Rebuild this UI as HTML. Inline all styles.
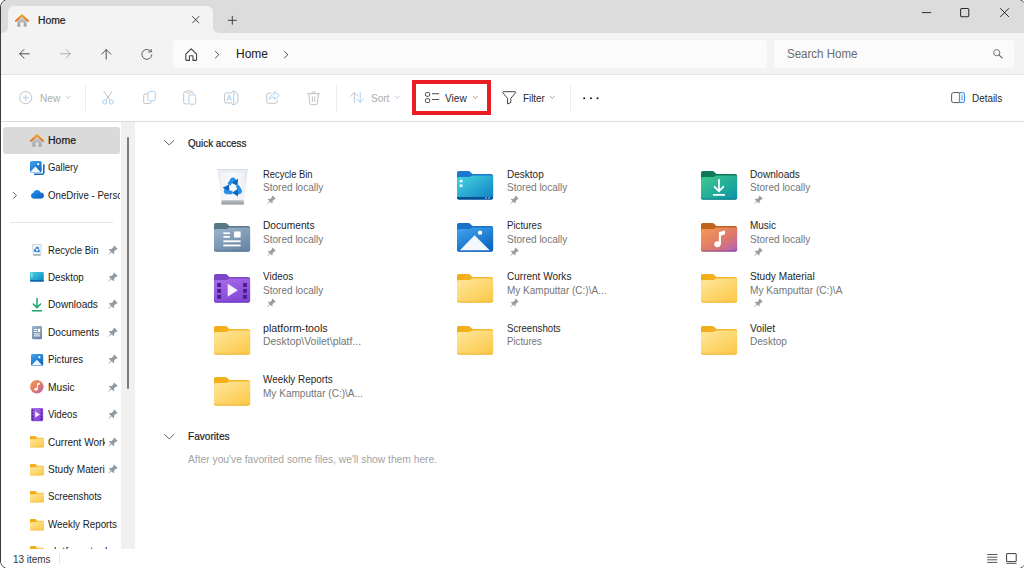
<!DOCTYPE html>
<html lang="en"><head><meta charset="utf-8"><title>Home - File Explorer</title>
<style>
html,body{margin:0;padding:0;background:#fff;}
body{width:1024px;height:568px;overflow:hidden;position:relative;font-family:"Liberation Sans", sans-serif;}
#win{position:absolute;left:0;top:-1px;width:1026px;height:570px;box-sizing:border-box;border:1px solid #3d3d3d;border-radius:8px;overflow:hidden;background:#fff;}
#in{position:absolute;left:-1px;top:0;width:1030px;height:568px;}
.b{position:absolute;}
.i{position:absolute;overflow:visible;}
.t{position:absolute;white-space:nowrap;line-height:16px;height:16px;}
.s{display:inline-block;transform-origin:0 50%;}
</style></head>
<body>
<svg width="0" height="0" style="position:absolute">
<defs>
<linearGradient id="gy" x1="0" y1="0" x2="0.8" y2="1"><stop offset="0" stop-color="#ffe79e"/><stop offset="1" stop-color="#fbca4c"/></linearGradient>
<linearGradient id="gyt" x1="0" y1="0" x2="1" y2="0"><stop offset="0" stop-color="#f2ac17"/><stop offset="1" stop-color="#f6bd33"/></linearGradient>
<linearGradient id="gdesk" x1="0" y1="0" x2="1" y2="1"><stop offset="0" stop-color="#46d6de"/><stop offset="1" stop-color="#0f7fc6"/></linearGradient>
<linearGradient id="gdown" x1="0" y1="0" x2="1" y2="1"><stop offset="0" stop-color="#3fcb8c"/><stop offset="1" stop-color="#0b93a6"/></linearGradient>
<linearGradient id="gdoc" x1="0" y1="0" x2="0.6" y2="1"><stop offset="0" stop-color="#9db6cc"/><stop offset="1" stop-color="#6c88a8"/></linearGradient>
<linearGradient id="gpic" x1="0" y1="0" x2="0.6" y2="1"><stop offset="0" stop-color="#45a6ee"/><stop offset="1" stop-color="#0c67c2"/></linearGradient>
<linearGradient id="gmus" x1="0" y1="0" x2="1" y2="1"><stop offset="0" stop-color="#f49c52"/><stop offset="0.55" stop-color="#e07a68"/><stop offset="0.85" stop-color="#c4689e"/><stop offset="1" stop-color="#9458d0"/></linearGradient>
<linearGradient id="gvid" x1="0" y1="0" x2="0.5" y2="1"><stop offset="0" stop-color="#ab6ee9"/><stop offset="1" stop-color="#8447d6"/></linearGradient>
<linearGradient id="gbin" x1="0" y1="0" x2="1" y2="0"><stop offset="0" stop-color="#dde4ea"/><stop offset="0.12" stop-color="#f1f4f6"/><stop offset="0.5" stop-color="#f9fafb"/><stop offset="0.88" stop-color="#eef1f4"/><stop offset="1" stop-color="#d9e0e7"/></linearGradient>
<linearGradient id="ghome" x1="0" y1="0" x2="0" y2="1"><stop offset="0" stop-color="#d4d4d4"/><stop offset="1" stop-color="#9d9d9d"/></linearGradient>
<linearGradient id="groof" x1="0" y1="0" x2="0" y2="1"><stop offset="0" stop-color="#f6a01f"/><stop offset="1" stop-color="#e8661a"/></linearGradient>
<linearGradient id="gcloud" x1="0" y1="0" x2="1" y2="1"><stop offset="0" stop-color="#2a9cf0"/><stop offset="1" stop-color="#0a58c0"/></linearGradient>
</defs></svg>
<div id="win"><div id="in">
<div class="b" style="left:0px;top:0px;width:1030px;height:33px;background:#dcdcdc"></div>
<div class="b" style="left:0px;top:33px;width:1030px;height:41px;background:#f3f3f3"></div>
<div class="b" style="left:0px;top:74px;width:1030px;height:1px;background:#e2e2e2"></div>
<div class="b" style="left:0px;top:121px;width:1030px;height:1px;background:#dbdbdb"></div>
<svg class="i" style="left:1px;top:6px" width="220" height="27" viewBox="0 0 220 27"><path d="M0 27 C4 27 7 25 7 20 V6 a6 6 0 0 1 6-6 H206 a6 6 0 0 1 6 6 V20 c0 5 3 7 7 7 Z" fill="#f3f3f3"/></svg>
<svg class="i" style="left:15.00px;top:13.50px" width="14" height="13" viewBox="0 0 14 13" ><path d="M2.4 6.6 7 2.4 11.6 6.6V12a.8.8 0 0 1-.8.8H8.7V8.6H5.3v4.2H3.2a.8.8 0 0 1-.8-.8Z" fill="url(#ghome)"/><path d="M.9 6.9 7 1.2 13.1 6.9" fill="none" stroke="url(#groof)" stroke-width="1.9" stroke-linecap="round" stroke-linejoin="round"/></svg>
<svg class="i" style="left:191.70px;top:16.00px" width="7.4" height="7.4" viewBox="0 0 7.4 7.4" ><path d="M.5.5 6.900 6.900M6.900.5.5 6.900" stroke="#3a3a3a" stroke-width=".95" stroke-linecap="round"/></svg>
<svg class="i" style="left:228.40px;top:15.80px" width="8.6" height="8.6" viewBox="0 0 8.6 8.6" ><path d="M4.300.3V8.300M.3 4.300H8.300" stroke="#3a3a3a" stroke-width=".95" stroke-linecap="round"/></svg>
<svg class="i" style="left:922.00px;top:11.70px" width="9" height="1.2" viewBox="0 0 9 1.2" ><path d="M.2.600H8.800" stroke="#2b2b2b" stroke-width="1" stroke-linecap="round"/></svg>
<svg class="i" style="left:959.80px;top:7.50px" width="9.4" height="9.4" viewBox="0 0 9.4 9.4" ><rect x=".600" y=".600" width="8.200" height="8.200" rx="1.200" fill="none" stroke="#2b2b2b" stroke-width="1.050"/></svg>
<svg class="i" style="left:1000.00px;top:7.50px" width="9.2" height="9.2" viewBox="0 0 9.2 9.2" ><path d="M.5.5 8.700 8.700M8.700.5.5 8.700" stroke="#2b2b2b" stroke-width="1" stroke-linecap="round"/></svg>
<svg class="i" style="left:18.50px;top:48.70px" width="11" height="9.6" viewBox="0 0 11 9.6" ><g><path d="M10.300 4.800H.700M5 .5.700 4.800 5 9.100" fill="none" stroke="#464646" stroke-width=".950" stroke-linecap="round" stroke-linejoin="round"/></g></svg>
<svg class="i" style="left:60.00px;top:48.70px" width="11" height="9.6" viewBox="0 0 11 9.6" ><g transform="translate(11 0) scale(-1 1)"><path d="M10.300 4.800H.700M5 .5.700 4.800 5 9.100" fill="none" stroke="#a9a9a9" stroke-width=".950" stroke-linecap="round" stroke-linejoin="round"/></g></svg>
<svg class="i" style="left:100.80px;top:48.50px" width="10.4" height="10.6" viewBox="0 0 10.4 10.6" ><path d="M5.200 10.100V.700M.6 5.200 5.200.600 9.800 5.200" fill="none" stroke="#464646" stroke-width=".950" stroke-linecap="round" stroke-linejoin="round"/></svg>
<svg class="i" style="left:141.10px;top:48.60px" width="12" height="11" viewBox="0 0 12 11" ><path d="M10.880 5.690A5 5 0 1 1 10.200 2.800" fill="none" stroke="#585858" stroke-width=".950" stroke-linecap="round"/><path d="M10.250.500V2.900H7.600" fill="none" stroke="#585858" stroke-width=".950" stroke-linecap="round" stroke-linejoin="round"/></svg>
<div class="b" style="left:173px;top:40px;width:593.5px;height:27.5px;background:#fbfbfb;border-radius:4px"></div>
<div class="b" style="left:773.7px;top:40px;width:240.8px;height:27.5px;background:#fbfbfb;border-radius:4px"></div>
<svg class="i" style="left:185.00px;top:48.00px" width="12.4" height="13.2" viewBox="0 0 12.4 13.2" ><path d="M.800 6.100 6.200.900 11.600 6.100V11.500a.9.900 0 0 1-.9.900H8V8.400a.7.700 0 0 0-.7-.7H5.100a.7.700 0 0 0-.7.700V12.400H1.700a.9.900 0 0 1-.9-.9Z" fill="none" stroke="#3c3c3c" stroke-width="1.050" stroke-linejoin="round"/></svg>
<svg class="i" style="left:215.00px;top:50.60px" width="4.4" height="7.4" viewBox="0 0 4.4 7.4" ><path d="M0.475 0.475 L3.9250000000000003 3.7 L0.475 6.925000000000001" fill="none" stroke="#4a4a4a" stroke-width="0.95" stroke-linecap="round" stroke-linejoin="round"/></svg>
<svg class="i" style="left:283.60px;top:50.60px" width="4.4" height="7.4" viewBox="0 0 4.4 7.4" ><path d="M0.475 0.475 L3.9250000000000003 3.7 L0.475 6.925000000000001" fill="none" stroke="#4a4a4a" stroke-width="0.95" stroke-linecap="round" stroke-linejoin="round"/></svg>
<svg class="i" style="left:993.40px;top:49.30px" width="9.8" height="9.6" viewBox="0 0 9.8 9.6" ><circle cx="3.700" cy="3.700" r="3.100" fill="none" stroke="#6c6c6c" stroke-width=".950"/><path d="M6 6 9.200 9" stroke="#6c6c6c" stroke-width="1.050" stroke-linecap="round"/></svg>
<svg class="i" style="left:18.60px;top:90.90px" width="13.4" height="13.4" viewBox="0 0 13.4 13.4" ><circle cx="6.700" cy="6.700" r="6.100" fill="none" stroke="#bcbcbc" stroke-width=".900"/><path d="M6.700 3.900V9.500M3.900 6.700H9.500" stroke="#a3cff2" stroke-width=".950" stroke-linecap="round"/></svg>
<svg class="i" style="left:65.60px;top:96.30px" width="4.6" height="2.9" viewBox="0 0 4.6 2.9" ><path d="M0.4 0.4 L2.3 2.5 L4.199999999999999 0.4" fill="none" stroke="#bdbdbd" stroke-width="0.8" stroke-linecap="round" stroke-linejoin="round"/></svg>
<div class="b" style="left:85px;top:84.6px;width:1px;height:26.4px;background:#ececec"></div>
<svg class="i" style="left:102.00px;top:90.80px" width="12.2" height="14" viewBox="0 0 12.2 14" ><path d="M1.800.300 8 9M10.000.300 3.900 9" stroke="#bcbcbc" stroke-width=".900" stroke-linecap="round"/><circle cx="2.550" cy="11.050" r="2.050" fill="none" stroke="#a3cff2" stroke-width="1"/><circle cx="9.350" cy="11.050" r="2.050" fill="none" stroke="#a3cff2" stroke-width="1"/></svg>
<svg class="i" style="left:142.50px;top:91.20px" width="13" height="13" viewBox="0 0 13 13" ><path d="M4.200 3H2.300A1.600 1.600 0 0 0 .700 4.600V10.900A1.600 1.600 0 0 0 2.300 12.500H6.600A1.600 1.600 0 0 0 8.200 10.900V10.400" fill="none" stroke="#bcbcbc" stroke-width=".900"/><rect x="4.900" y=".500" width="7.400" height="9.300" rx="1.600" fill="none" stroke="#a3cff2" stroke-width=".950"/></svg>
<svg class="i" style="left:183.40px;top:90.30px" width="13.4" height="14.8" viewBox="0 0 13.400 14.800" ><path d="M5.200 13.900H2.200A1.500 1.500 0 0 1 .700 12.400V3.400A1.500 1.500 0 0 1 2.200 1.900H3.300M7.800 1.900H9A1.500 1.500 0 0 1 10.500 3.400V4.400" fill="none" stroke="#bcbcbc" stroke-width=".900"/><rect x="3.300" y=".600" width="4.500" height="2.400" rx="1.100" fill="none" stroke="#bcbcbc" stroke-width=".900"/><rect x="5.900" y="4.900" width="6.800" height="9.300" rx="1.400" fill="none" stroke="#a3cff2" stroke-width=".950"/></svg>
<svg class="i" style="left:223.80px;top:90.80px" width="14.4" height="14" viewBox="0 0 14.400 14" ><path d="M8.200 1.900H2.200A1.700 1.700 0 0 0 .500 3.600V10.300A1.700 1.700 0 0 0 2.200 12H8.200M11.200 1.900H12.200A1.700 1.700 0 0 1 13.900 3.600V10.300A1.700 1.700 0 0 1 12.200 12H11.200" fill="none" stroke="#bcbcbc" stroke-width=".900"/><path d="M2.800 9.700 5.200 3.900 7.600 9.700M3.600 7.900H6.800" fill="none" stroke="#a3cff2" stroke-width=".950" stroke-linejoin="round"/><path d="M9.700.4V13.600M8.300.4H11.100M8.300 13.600H11.100" stroke="#a3cff2" stroke-width=".950" stroke-linecap="round"/></svg>
<svg class="i" style="left:265.80px;top:91.20px" width="14" height="13" viewBox="0 0 14 13" ><path d="M4.600 2.100H2.700A2 2 0 0 0 .700 4.100V10.300A2 2 0 0 0 2.700 12.300H9.300A2 2 0 0 0 11.300 10.300V9.300" fill="none" stroke="#bcbcbc" stroke-width=".900" stroke-linecap="round"/><path d="M8.600.500 13.300 4.500 8.600 8.500V6.300C6 6.100 4.400 7 3.200 8.700 3.600 5.400 5.400 3.200 8.600 2.800Z" fill="none" stroke="#a3cff2" stroke-width=".950" stroke-linejoin="round"/></svg>
<svg class="i" style="left:307.00px;top:90.70px" width="13.2" height="14.2" viewBox="0 0 13.200 14.200" ><path d="M.500 2.700H12.700M4.700 2.500A1.900 1.900 0 0 1 8.500 2.500M1.900 2.900 2.800 12.300A1.500 1.500 0 0 0 4.300 13.700H8.900A1.500 1.500 0 0 0 10.400 12.300L11.300 2.900M5.400 5.800V10.600M7.800 5.800V10.600" fill="none" stroke="#bcbcbc" stroke-width=".950" stroke-linecap="round"/></svg>
<div class="b" style="left:336px;top:84.6px;width:1px;height:26.4px;background:#ececec"></div>
<svg class="i" style="left:350.20px;top:92.30px" width="14" height="11" viewBox="0 0 14 11" ><path d="M4.300 10.500V.700M.600 4.300 4.300.600 8 4.300" fill="none" stroke="#bcbcbc" stroke-width=".900" stroke-linecap="round" stroke-linejoin="round"/><path d="M10.200.500V10.300M6.500 6.700 10.200 10.400 13.500 6.700" fill="none" stroke="#a3cff2" stroke-width=".950" stroke-linecap="round" stroke-linejoin="round"/></svg>
<svg class="i" style="left:395.40px;top:96.30px" width="4.6" height="2.9" viewBox="0 0 4.6 2.9" ><path d="M0.4 0.4 L2.3 2.5 L4.199999999999999 0.4" fill="none" stroke="#bdbdbd" stroke-width="0.8" stroke-linecap="round" stroke-linejoin="round"/></svg>
<div class="b" style="left:412.2px;top:79.6px;width:78.7px;height:35.9px;border:4.300px solid #ea1c24;box-sizing:border-box"></div>
<svg class="i" style="left:424.80px;top:92.20px" width="14.2" height="11" viewBox="0 0 14.200 11" ><rect x=".500" y=".500" width="4.200" height="3.800" rx="1.200" fill="none" stroke="#3a3a3a" stroke-width=".900"/><rect x=".500" y="6.700" width="4.200" height="3.800" rx="1.200" fill="none" stroke="#3a3a3a" stroke-width=".900"/><path d="M7.400 1.700H13.700M7.400 7.500H13.700" stroke="#3a3a3a" stroke-width=".900" stroke-linecap="round"/></svg>
<svg class="i" style="left:473.20px;top:96.30px" width="4.6" height="2.9" viewBox="0 0 4.6 2.9" ><path d="M0.4 0.4 L2.3 2.5 L4.199999999999999 0.4" fill="none" stroke="#8a8a8a" stroke-width="0.8" stroke-linecap="round" stroke-linejoin="round"/></svg>
<svg class="i" style="left:501.80px;top:91.00px" width="14.4" height="13.6" viewBox="0 0 14.400 13.600" ><path d="M1.300.700H13.100A.6.600 0 0 1 13.600 1.700L8.800 7.400V11.400L5.600 13V7.400L.800 1.700A.6.600 0 0 1 1.300.700Z" fill="none" stroke="#3a3a3a" stroke-width=".950" stroke-linejoin="round"/></svg>
<svg class="i" style="left:550.40px;top:96.30px" width="4.6" height="2.9" viewBox="0 0 4.6 2.9" ><path d="M0.4 0.4 L2.3 2.5 L4.199999999999999 0.4" fill="none" stroke="#8a8a8a" stroke-width="0.8" stroke-linecap="round" stroke-linejoin="round"/></svg>
<div class="b" style="left:570.2px;top:84.6px;width:1px;height:26.4px;background:#ececec"></div>
<svg class="i" style="left:583.40px;top:97.30px" width="16" height="2.4" viewBox="0 0 16 2.400" ><circle cx="1.200" cy="1.200" r="1.050" fill="#1f1f1f"/><circle cx="7.900" cy="1.200" r="1.050" fill="#1f1f1f"/><circle cx="14.600" cy="1.200" r="1.050" fill="#1f1f1f"/></svg>
<svg class="i" style="left:950.80px;top:91.90px" width="14.2" height="11.2" viewBox="0 0 14.200 11.200" ><path d="M8.400.600H2.400A1.800 1.800 0 0 0 .600 2.400V8.800A1.800 1.800 0 0 0 2.400 10.600H8.400" fill="none" stroke="#555" stroke-width="1"/><path d="M8.400.600H11.800A1.800 1.800 0 0 1 13.600 2.400V8.800A1.800 1.800 0 0 1 11.800 10.600H8.400Z" fill="#e3f0fb" stroke="#2f8de0" stroke-width="1"/><path d="M10.200 4H11.900M10.200 5.700H11.900M10.200 7.400H11.900" stroke="#2f8de0" stroke-width=".700"/></svg>
<div class="b" style="left:121px;top:122px;width:13.7px;height:427px;background:#f0f0f0"></div>
<div class="b" style="left:127px;top:136.5px;width:2px;height:252px;background:#7c7c7c;border-radius:1px"></div>
<div class="b" style="left:3px;top:127px;width:117px;height:26.8px;background:#dadada;border-radius:3px"></div>
<div class="b" style="left:10px;top:222.3px;width:103px;height:1px;background:#e3e3e3"></div>
<svg class="i" style="left:30.00px;top:133.50px" width="14" height="13" viewBox="0 0 14 13" ><path d="M2.4 6.6 7 2.4 11.6 6.6V12a.8.8 0 0 1-.8.8H8.7V8.6H5.3v4.2H3.2a.8.8 0 0 1-.8-.8Z" fill="url(#ghome)"/><path d="M.9 6.9 7 1.2 13.1 6.9" fill="none" stroke="url(#groof)" stroke-width="1.9" stroke-linecap="round" stroke-linejoin="round"/></svg>
<svg class="i" style="left:30.00px;top:160.83px" width="14" height="13.6" viewBox="0 0 14 13.6" ><path d="M4 13.2H12.2a1.6 1.6 0 0 0 1.6-1.6V3.2" fill="none" stroke="#1668c8" stroke-width="1.6"/><rect x="0" y="0" width="11.6" height="11.6" rx="1.6" fill="url(#gpic)"/><path d="M.6 10.6 5.4 5.6 10.8 11.2H1.4Z" fill="#eef6fd"/><circle cx="8.2" cy="3.2" r="1.1" fill="#fff"/></svg>
<svg class="i" style="left:29.80px;top:190.46px" width="14" height="8.8" viewBox="0 0 14 8.8" ><path d="M3.4 8.6A3 3 0 0 1 3.2 2.8 4 4 0 0 1 10.6 2.4 3.1 3.1 0 0 1 11 8.6Z" fill="url(#gcloud)"/><path d="M1 6.2A2.6 2.6 0 0 1 3.4 3.6C5.4 3.4 7.4 4.6 11.8 7.8A3 3 0 0 1 11 8.6H3.4A2.6 2.6 0 0 1 1 6.2Z" fill="#1478d4" opacity=".55"/></svg>
<svg class="i" style="left:31.90px;top:244.12px" width="10" height="12" viewBox="0 0 10 12" ><path d="M.400.500H9.600L8.600 10.600H1.400Z" fill="#f3f5f7" stroke="#c3c9cf" stroke-width=".700"/><path d="M1.300 10.100H8.700L8.600 11.700H1.400Z" fill="#aab0b7"/><g transform="translate(5 5.900) scale(.400)"><g transform="rotate(0)"><path d="M-3.300-2.300-.900-6.500A1.050 1.050 0 0 1 .900-6.500L1.900-4.800" fill="none" stroke="#2490ea" stroke-width="2.800" stroke-linejoin="round"/><path d="M4.300-7.400-1.300-4.100 3.900-1.500Z" fill="#0f65c4"/></g><g transform="rotate(120)"><path d="M-3.300-2.300-.900-6.500A1.050 1.050 0 0 1 .900-6.500L1.900-4.800" fill="none" stroke="#2490ea" stroke-width="2.800" stroke-linejoin="round"/><path d="M4.300-7.400-1.300-4.100 3.900-1.500Z" fill="#0f65c4"/></g><g transform="rotate(240)"><path d="M-3.300-2.300-.900-6.500A1.050 1.050 0 0 1 .900-6.500L1.900-4.800" fill="none" stroke="#2490ea" stroke-width="2.800" stroke-linejoin="round"/><path d="M4.300-7.400-1.300-4.100 3.900-1.500Z" fill="#0f65c4"/></g></g></svg>
<svg class="i" style="left:107.40px;top:246.62px" width="9.2" height="9.2" viewBox="0 0 9.2 9.2" ><g transform="translate(4.95 4.25) rotate(45) scale(0.979)" fill="#929ba2"><path d="M-2.500-5.800H2.500V-4.900L1.800-3.900V-1.300L3.300.100V1H.600L0 6.200-.600 1H-3.300V.100L-1.800-1.300V-3.900L-2.500-4.900Z"/></g></svg>
<svg class="i" style="left:30.00px;top:272.45px" width="13.8" height="9.6" viewBox="0 0 13.8 9.6" ><rect x="0" y="0" width="13.8" height="9.6" rx="1.2" fill="url(#gdesk)"/><path d="M0 8.2H13.8V8.4A1.2 1.2 0 0 1 12.6 9.6H1.2A1.2 1.2 0 0 1 0 8.400Z" fill="#0a559f"/><rect x="1.3" y="1.6" width="1.2" height="1.1" fill="#fff"/><rect x="1.3" y="3.6" width="1.2" height="1.1" fill="#fff"/></svg>
<svg class="i" style="left:107.40px;top:274.05px" width="9.2" height="9.2" viewBox="0 0 9.2 9.2" ><g transform="translate(4.95 4.25) rotate(45) scale(0.979)" fill="#929ba2"><path d="M-2.500-5.800H2.500V-4.900L1.800-3.900V-1.300L3.300.100V1H.600L0 6.200-.600 1H-3.300V.100L-1.800-1.300V-3.900L-2.500-4.900Z"/></g></svg>
<svg class="i" style="left:31.60px;top:297.88px" width="10" height="13.6" viewBox="0 0 10 13.6" ><path d="M5 .4V9.4M1.4 6 5 9.6 8.600 6" fill="none" stroke="#19a56c" stroke-width="1.5" stroke-linecap="round" stroke-linejoin="round"/><path d="M.4 12.800H9.600" stroke="#19a56c" stroke-width="1.4" stroke-linecap="round"/></svg>
<svg class="i" style="left:107.40px;top:301.48px" width="9.2" height="9.2" viewBox="0 0 9.2 9.2" ><g transform="translate(4.95 4.25) rotate(45) scale(0.979)" fill="#929ba2"><path d="M-2.500-5.800H2.500V-4.900L1.800-3.900V-1.300L3.300.100V1H.600L0 6.200-.600 1H-3.300V.100L-1.800-1.300V-3.900L-2.500-4.900Z"/></g></svg>
<svg class="i" style="left:31.60px;top:325.51px" width="10" height="13.2" viewBox="0 0 10 13.2" ><rect x="0" y="0" width="10" height="13.2" rx="1.2" fill="url(#gdoc)"/><rect x="2" y="3" width="3.2" height="1" fill="#fff"/><rect x="2" y="5" width="3.2" height="1" fill="#fff"/><rect x="6" y="2.8" width="2.2" height="3.2" fill="#fff"/><rect x="2" y="7.400" width="6.2" height="1" fill="#fff"/><rect x="2" y="9.400" width="6.2" height="1" fill="#fff"/></svg>
<svg class="i" style="left:107.40px;top:328.91px" width="9.2" height="9.2" viewBox="0 0 9.2 9.2" ><g transform="translate(4.95 4.25) rotate(45) scale(0.979)" fill="#929ba2"><path d="M-2.500-5.800H2.500V-4.900L1.800-3.900V-1.300L3.300.100V1H.600L0 6.200-.600 1H-3.300V.100L-1.800-1.300V-3.900L-2.500-4.900Z"/></g></svg>
<svg class="i" style="left:30.60px;top:353.54px" width="12.2" height="12" viewBox="0 0 12.2 12" ><rect x="0" y="0" width="12.2" height="12" rx="1.4" fill="url(#gpic)"/><path d="M.8 11 5.800 5.800 11.400 11.400H1.400Z" fill="#f0f7fd"/><circle cx="8.400" cy="3.200" r="1.100" fill="#fff"/></svg>
<svg class="i" style="left:107.40px;top:356.34px" width="9.2" height="9.2" viewBox="0 0 9.2 9.2" ><g transform="translate(4.95 4.25) rotate(45) scale(0.979)" fill="#929ba2"><path d="M-2.500-5.800H2.500V-4.900L1.800-3.900V-1.300L3.300.100V1H.600L0 6.200-.600 1H-3.300V.100L-1.800-1.300V-3.900L-2.500-4.900Z"/></g></svg>
<svg class="i" style="left:30.00px;top:380.17px" width="13.6" height="13.6" viewBox="0 0 13.6 13.6" ><circle cx="6.8" cy="6.8" r="6.8" fill="url(#gmus)"/><ellipse cx="6" cy="9.200" rx="1.700" ry="1.500" fill="#fff"/><path d="M6.900 9.300V3.400L9.800 2.600V4.600L7.800 5.200V9.300Z" fill="#fff"/></svg>
<svg class="i" style="left:107.40px;top:383.77px" width="9.2" height="9.2" viewBox="0 0 9.2 9.2" ><g transform="translate(4.95 4.25) rotate(45) scale(0.979)" fill="#929ba2"><path d="M-2.500-5.800H2.500V-4.900L1.800-3.900V-1.300L3.300.100V1H.600L0 6.200-.600 1H-3.300V.100L-1.800-1.300V-3.900L-2.500-4.900Z"/></g></svg>
<svg class="i" style="left:30.60px;top:407.80px" width="12.2" height="13.2" viewBox="0 0 12.2 13.2" ><rect x="0" y="0" width="12.2" height="13.2" rx="1.4" fill="url(#gvid)"/><rect x="0.9" y="1.4" width="1.5" height="1.700" fill="#43207e"/><rect x="0.9" y="4.4" width="1.5" height="1.700" fill="#43207e"/><rect x="0.9" y="7.4" width="1.5" height="1.700" fill="#43207e"/><rect x="0.9" y="10.3" width="1.5" height="1.700" fill="#43207e"/><rect x="9.8" y="1.4" width="1.5" height="1.700" fill="#43207e"/><rect x="9.8" y="4.4" width="1.5" height="1.700" fill="#43207e"/><rect x="9.8" y="7.4" width="1.5" height="1.700" fill="#43207e"/><rect x="9.8" y="10.3" width="1.5" height="1.700" fill="#43207e"/><path d="M4.200 3.600 9 6.600 4.200 9.600Z" fill="#f5effc"/></svg>
<svg class="i" style="left:107.40px;top:411.20px" width="9.2" height="9.2" viewBox="0 0 9.2 9.2" ><g transform="translate(4.95 4.25) rotate(45) scale(0.979)" fill="#929ba2"><path d="M-2.500-5.800H2.500V-4.900L1.800-3.900V-1.300L3.300.100V1H.600L0 6.200-.600 1H-3.300V.100L-1.800-1.300V-3.900L-2.500-4.900Z"/></g></svg>
<svg class="i" style="left:30.00px;top:436.33px" width="13.8" height="11.2" viewBox="0 0 13.8 11.2" ><path d="M.900 0H5.100c.400 0 .700.100 1 .400L7.300 1.800H12.900a.900.900 0 0 1 .900.900V10.300a.900.900 0 0 1-.900.900H.900A.900.900 0 0 1 0 10.300V.900A.900.900 0 0 1 .900 0Z" fill="url(#gyt)"/><path d="M0 4.200a.900.900 0 0 1 .900-.900H5.600c.400 0 .700-.100 1-.300l.300-.200c.300-.200.500-.200.900-.200H12.900a.900.900 0 0 1 .900.900V10.300a.900.900 0 0 1-.900.900H.900A.900.900 0 0 1 0 10.300Z" fill="url(#gy)"/><path d="M0 10.300a.900.900 0 0 0 .900.900H12.900a.900.900 0 0 0 .900-.900v-.500a.900.900 0 0 1-.900.900H.900A.900.900 0 0 1 0 9.800Z" fill="#efb73a" opacity=".8"/></svg>
<svg class="i" style="left:107.40px;top:438.63px" width="9.2" height="9.2" viewBox="0 0 9.2 9.2" ><g transform="translate(4.95 4.25) rotate(45) scale(0.979)" fill="#929ba2"><path d="M-2.500-5.800H2.500V-4.900L1.800-3.900V-1.300L3.300.100V1H.600L0 6.200-.600 1H-3.300V.100L-1.800-1.300V-3.900L-2.500-4.900Z"/></g></svg>
<svg class="i" style="left:30.00px;top:463.76px" width="13.8" height="11.2" viewBox="0 0 13.8 11.2" ><path d="M.900 0H5.100c.400 0 .700.100 1 .400L7.300 1.800H12.900a.900.900 0 0 1 .900.900V10.300a.900.900 0 0 1-.900.900H.900A.900.900 0 0 1 0 10.300V.900A.900.900 0 0 1 .900 0Z" fill="url(#gyt)"/><path d="M0 4.200a.900.900 0 0 1 .900-.900H5.600c.400 0 .700-.100 1-.300l.300-.200c.300-.200.500-.200.900-.200H12.900a.900.900 0 0 1 .900.900V10.300a.900.900 0 0 1-.900.900H.900A.900.900 0 0 1 0 10.300Z" fill="url(#gy)"/><path d="M0 10.300a.900.900 0 0 0 .900.900H12.900a.900.900 0 0 0 .900-.900v-.500a.900.900 0 0 1-.900.900H.900A.900.900 0 0 1 0 9.800Z" fill="#efb73a" opacity=".8"/></svg>
<svg class="i" style="left:107.40px;top:466.06px" width="9.2" height="9.2" viewBox="0 0 9.2 9.2" ><g transform="translate(4.95 4.25) rotate(45) scale(0.979)" fill="#929ba2"><path d="M-2.500-5.800H2.500V-4.900L1.800-3.900V-1.300L3.300.100V1H.600L0 6.200-.600 1H-3.300V.100L-1.800-1.300V-3.900L-2.500-4.900Z"/></g></svg>
<svg class="i" style="left:30.00px;top:491.19px" width="13.8" height="11.2" viewBox="0 0 13.8 11.2" ><path d="M.900 0H5.100c.400 0 .700.100 1 .400L7.300 1.800H12.900a.900.900 0 0 1 .900.900V10.300a.900.900 0 0 1-.900.900H.900A.900.900 0 0 1 0 10.300V.900A.900.900 0 0 1 .900 0Z" fill="url(#gyt)"/><path d="M0 4.200a.900.900 0 0 1 .900-.900H5.600c.400 0 .700-.100 1-.300l.300-.200c.300-.200.500-.200.900-.200H12.900a.900.900 0 0 1 .900.900V10.300a.900.900 0 0 1-.900.900H.900A.900.900 0 0 1 0 10.300Z" fill="url(#gy)"/><path d="M0 10.300a.900.900 0 0 0 .900.900H12.900a.900.900 0 0 0 .900-.900v-.500a.900.900 0 0 1-.900.900H.900A.900.900 0 0 1 0 9.800Z" fill="#efb73a" opacity=".8"/></svg>
<svg class="i" style="left:30.00px;top:518.62px" width="13.8" height="11.2" viewBox="0 0 13.8 11.2" ><path d="M.900 0H5.100c.400 0 .700.100 1 .400L7.300 1.800H12.900a.900.900 0 0 1 .900.900V10.300a.900.900 0 0 1-.900.900H.900A.900.900 0 0 1 0 10.300V.900A.900.900 0 0 1 .900 0Z" fill="url(#gyt)"/><path d="M0 4.200a.900.900 0 0 1 .900-.900H5.600c.400 0 .700-.100 1-.300l.300-.200c.300-.200.500-.200.900-.200H12.900a.900.900 0 0 1 .900.900V10.300a.900.900 0 0 1-.900.900H.900A.900.900 0 0 1 0 10.300Z" fill="url(#gy)"/><path d="M0 10.300a.900.900 0 0 0 .900.900H12.900a.900.900 0 0 0 .900-.900v-.500a.900.900 0 0 1-.900.900H.900A.900.900 0 0 1 0 9.800Z" fill="#efb73a" opacity=".8"/></svg>
<svg class="i" style="left:30.00px;top:546.05px" width="13.8" height="11.2" viewBox="0 0 13.8 11.2" ><path d="M.900 0H5.100c.400 0 .700.100 1 .400L7.300 1.800H12.900a.900.900 0 0 1 .900.900V10.300a.900.900 0 0 1-.900.900H.900A.900.900 0 0 1 0 10.300V.900A.900.900 0 0 1 .900 0Z" fill="url(#gyt)"/><path d="M0 4.200a.900.900 0 0 1 .900-.900H5.600c.400 0 .700-.100 1-.300l.300-.200c.300-.200.500-.200.900-.200H12.900a.900.900 0 0 1 .900.900V10.300a.900.900 0 0 1-.900.900H.900A.900.900 0 0 1 0 10.300Z" fill="url(#gy)"/><path d="M0 10.300a.900.900 0 0 0 .900.900H12.900a.900.900 0 0 0 .900-.900v-.500a.900.900 0 0 1-.900.900H.900A.900.900 0 0 1 0 9.800Z" fill="#efb73a" opacity=".8"/></svg>
<svg class="i" style="left:13.20px;top:192.30px" width="4" height="6.9" viewBox="0 0 4 6.9" ><path d="M0.475 0.475 L3.525 3.45 L0.475 6.425000000000001" fill="none" stroke="#5a5a5a" stroke-width="0.95" stroke-linecap="round" stroke-linejoin="round"/></svg>
<div class="b" style="left:1px;top:549px;width:1029px;height:19px;background:#fff"></div>
<div class="b" style="left:59px;top:554px;width:1px;height:10px;background:#e6e6e6"></div>
<svg class="i" style="left:987.00px;top:554.00px" width="10.6" height="9" viewBox="0 0 10.600 9" ><path d="M.2.500H10.400M.2 3.200H10.400M.2 5.800H10.400M.2 8.400H10.400" stroke="#3a3a3a" stroke-width=".850"/></svg>
<svg class="i" style="left:1005.80px;top:553.00px" width="10.8" height="11" viewBox="0 0 10.800 11" ><rect x=".600" y=".600" width="9.600" height="8" rx=".300" fill="none" stroke="#3a3a3a" stroke-width="1"/><path d="M.3 10.400H10.500" stroke="#3a3a3a" stroke-width=".850"/></svg>
<svg class="i" style="left:164.40px;top:140.20px" width="10.4" height="5.4" viewBox="0 0 10.4 5.4" ><path d="M0.475 0.475 L5.2 4.925000000000001 L9.925 0.475" fill="none" stroke="#5c5c5c" stroke-width="0.95" stroke-linecap="round" stroke-linejoin="round"/></svg>
<svg class="i" style="left:164.40px;top:433.90px" width="10.4" height="5.4" viewBox="0 0 10.4 5.4" ><path d="M0.475 0.475 L5.2 4.925000000000001 L9.925 0.475" fill="none" stroke="#5c5c5c" stroke-width="0.95" stroke-linecap="round" stroke-linejoin="round"/></svg>
<svg class="i" style="left:217.00px;top:168.80px" width="31.3" height="36" viewBox="0 0 31.3 36" ><path d="M.500.800H30.800L26.700 32H4.600Z" fill="url(#gbin)"/><path d="M.500.800H30.800L30.500 3H.800Z" fill="#eef1f4"/><path d="M.300.700H31" stroke="#cdd3da" stroke-width=".900"/><path d="M2.400 3H28.900" stroke="#e0e5ea" stroke-width=".700"/><path d="M4.500 31.200H26.800V35.500H4.500Z" fill="#b4b9bf"/><path d="M4.500 33.300H26.800V35.600H4.500Z" fill="#a0a6ad"/><g transform="translate(15.900 18.700) scale(1.200)"><g transform="rotate(0)"><path d="M-3.300-2.300-.900-6.500A1.050 1.050 0 0 1 .900-6.500L1.900-4.800" fill="none" stroke="#2490ea" stroke-width="2.800" stroke-linejoin="round"/><path d="M4.300-7.400-1.300-4.100 3.900-1.500Z" fill="#0f65c4"/></g><g transform="rotate(120)"><path d="M-3.300-2.300-.900-6.500A1.050 1.050 0 0 1 .900-6.500L1.900-4.800" fill="none" stroke="#2490ea" stroke-width="2.800" stroke-linejoin="round"/><path d="M4.300-7.400-1.300-4.100 3.900-1.500Z" fill="#0f65c4"/></g><g transform="rotate(240)"><path d="M-3.300-2.300-.900-6.500A1.050 1.050 0 0 1 .900-6.500L1.900-4.800" fill="none" stroke="#2490ea" stroke-width="2.800" stroke-linejoin="round"/><path d="M4.300-7.400-1.300-4.100 3.900-1.500Z" fill="#0f65c4"/></g></g></svg>
<svg class="i" style="left:265.90px;top:197.10px" width="8.4" height="8.4" viewBox="0 0 8.4 8.4" ><g transform="translate(4.55 3.85) rotate(45) scale(0.894)" fill="#9a9fa4"><path d="M-2.500-5.800H2.500V-4.900L1.800-3.900V-1.300L3.300.100V1H.600L0 6.200-.600 1H-3.300V.100L-1.800-1.300V-3.900L-2.500-4.900Z"/></g></svg>
<svg class="i" style="left:213.90px;top:222.70px" width="36.1" height="28.4" viewBox="0 0 37 28.3" preserveAspectRatio="none"><path d="M1.8 0H11.6c.9 0 1.5.3 2.1.9L15.8 3H35a2 2 0 0 1 2 2V26.3a2 2 0 0 1-2 2H2a2 2 0 0 1-2-2V1.8A1.8 1.8 0 0 1 1.8 0Z" fill="#587885"/><path d="M0 7.800a1.800 1.800 0 0 1 1.800-1.800H12.400c.800 0 1.400-.200 2-.700l.500-.400c.500-.400 1-.500 1.700-.500H35.200a1.800 1.800 0 0 1 1.800 1.800V26.300a2 2 0 0 1-2 2H2a2 2 0 0 1-2-2Z" fill="url(#gdoc)"/><rect x="9.600" y="9.300" width="6.600" height="1.800" fill="#fff"/><rect x="9.600" y="12.900" width="6.600" height="1.800" fill="#fff"/><rect x="20.600" y="8.400" width="6.700" height="6.100" fill="#fff"/><rect x="9.600" y="17.300" width="17.700" height="1.800" fill="#fff"/><rect x="9.600" y="21.500" width="17.700" height="1.800" fill="#fff"/><path d="M0 26.3a2 2 0 0 0 2 2H35a2 2 0 0 0 2-2v-.9a2 2 0 0 1-2 2H2a2 2 0 0 1-2-2Z" fill="#4f6c8b" opacity=".8"/></svg>
<svg class="i" style="left:265.90px;top:248.50px" width="8.4" height="8.4" viewBox="0 0 8.4 8.4" ><g transform="translate(4.55 3.85) rotate(45) scale(0.894)" fill="#9a9fa4"><path d="M-2.500-5.800H2.500V-4.900L1.800-3.900V-1.300L3.300.100V1H.600L0 6.200-.600 1H-3.300V.100L-1.800-1.300V-3.900L-2.500-4.900Z"/></g></svg>
<svg class="i" style="left:213.90px;top:274.10px" width="36.1" height="28.4" viewBox="0 0 37 28.3" preserveAspectRatio="none"><path d="M1.8 0H11.6c.9 0 1.5.3 2.1.9L15.8 3H35a2 2 0 0 1 2 2V26.3a2 2 0 0 1-2 2H2a2 2 0 0 1-2-2V1.8A1.8 1.8 0 0 1 1.8 0Z" fill="#7d46c8"/><path d="M0 7.800a1.800 1.800 0 0 1 1.800-1.800H12.400c.800 0 1.400-.200 2-.700l.500-.400c.500-.400 1-.500 1.700-.500H35.200a1.800 1.800 0 0 1 1.800 1.800V26.300a2 2 0 0 1-2 2H2a2 2 0 0 1-2-2Z" fill="url(#gvid)"/><rect x="3.3" y="9.0" width="3.900" height="3.900" fill="#46208a"/><rect x="3.3" y="14.9" width="3.900" height="3.900" fill="#46208a"/><rect x="3.3" y="20.8" width="3.900" height="3.900" fill="#46208a"/><rect x="29.8" y="9.0" width="3.900" height="3.900" fill="#46208a"/><rect x="29.8" y="14.9" width="3.900" height="3.900" fill="#46208a"/><rect x="29.8" y="20.8" width="3.900" height="3.900" fill="#46208a"/><path d="M14 9.800 24.400 16.200 14 22.600Z" fill="#f6f0fd"/><path d="M0 26.3a2 2 0 0 0 2 2H35a2 2 0 0 0 2-2v-.9a2 2 0 0 1-2 2H2a2 2 0 0 1-2-2Z" fill="#6431b8" opacity=".7"/></svg>
<svg class="i" style="left:265.90px;top:299.90px" width="8.4" height="8.4" viewBox="0 0 8.4 8.4" ><g transform="translate(4.55 3.85) rotate(45) scale(0.894)" fill="#9a9fa4"><path d="M-2.500-5.800H2.500V-4.900L1.800-3.900V-1.300L3.300.100V1H.600L0 6.200-.600 1H-3.300V.100L-1.800-1.300V-3.900L-2.500-4.900Z"/></g></svg>
<svg class="i" style="left:213.90px;top:325.50px" width="36.1" height="28.4" viewBox="0 0 37 28.3" preserveAspectRatio="none"><path d="M1.8 0H11.6c.9 0 1.5.3 2.1.9L15.8 3H35a2 2 0 0 1 2 2V26.3a2 2 0 0 1-2 2H2a2 2 0 0 1-2-2V1.8A1.8 1.8 0 0 1 1.8 0Z" fill="url(#gyt)"/><path d="M0 7.800a1.800 1.800 0 0 1 1.800-1.800H12.400c.800 0 1.400-.200 2-.700l.500-.400c.500-.400 1-.500 1.700-.500H35.200a1.800 1.800 0 0 1 1.800 1.800V26.300a2 2 0 0 1-2 2H2a2 2 0 0 1-2-2Z" fill="url(#gy)"/><path d="M0 26.3a2 2 0 0 0 2 2H35a2 2 0 0 0 2-2v-.9a2 2 0 0 1-2 2H2a2 2 0 0 1-2-2Z" fill="#e9ae33" opacity=".7"/></svg>
<svg class="i" style="left:213.90px;top:376.90px" width="36.1" height="28.4" viewBox="0 0 37 28.3" preserveAspectRatio="none"><path d="M1.8 0H11.6c.9 0 1.5.3 2.1.9L15.8 3H35a2 2 0 0 1 2 2V26.3a2 2 0 0 1-2 2H2a2 2 0 0 1-2-2V1.8A1.8 1.8 0 0 1 1.8 0Z" fill="url(#gyt)"/><path d="M0 7.800a1.800 1.800 0 0 1 1.800-1.800H12.400c.800 0 1.400-.200 2-.700l.500-.400c.500-.400 1-.500 1.700-.500H35.200a1.800 1.800 0 0 1 1.800 1.800V26.300a2 2 0 0 1-2 2H2a2 2 0 0 1-2-2Z" fill="url(#gy)"/><path d="M0 26.3a2 2 0 0 0 2 2H35a2 2 0 0 0 2-2v-.9a2 2 0 0 1-2 2H2a2 2 0 0 1-2-2Z" fill="#e9ae33" opacity=".7"/></svg>
<svg class="i" style="left:457.35px;top:171.30px" width="36.1" height="28.4" viewBox="0 0 37 28.3" preserveAspectRatio="none"><path d="M1.8 0H11.6c.9 0 1.5.3 2.1.9L15.8 3H35a2 2 0 0 1 2 2V26.3a2 2 0 0 1-2 2H2a2 2 0 0 1-2-2V1.8A1.8 1.8 0 0 1 1.8 0Z" fill="#1a78cf"/><path d="M0 7.800a1.800 1.800 0 0 1 1.800-1.800H12.400c.800 0 1.400-.200 2-.700l.500-.400c.500-.400 1-.500 1.700-.500H35.200a1.800 1.800 0 0 1 1.800 1.800V26.300a2 2 0 0 1-2 2H2a2 2 0 0 1-2-2Z" fill="url(#gdesk)"/><path d="M0 26h37v.3a2 2 0 0 1-2 2H2a2 2 0 0 1-2-2Z" fill="#0b4f96"/><rect x="2.800" y="8.700" width="2.800" height="2.600" fill="#f0fdff"/><rect x="2.800" y="13.400" width="2.800" height="2.600" fill="#f0fdff"/><rect x="29" y="26.400" width="1.600" height="1.100" fill="#bfe0f5"/><rect x="32" y="26.400" width="1.600" height="1.100" fill="#bfe0f5"/></svg>
<svg class="i" style="left:509.35px;top:197.10px" width="8.4" height="8.4" viewBox="0 0 8.4 8.4" ><g transform="translate(4.55 3.85) rotate(45) scale(0.894)" fill="#9a9fa4"><path d="M-2.500-5.800H2.500V-4.900L1.800-3.900V-1.300L3.300.100V1H.600L0 6.200-.600 1H-3.300V.100L-1.800-1.300V-3.900L-2.500-4.900Z"/></g></svg>
<svg class="i" style="left:457.35px;top:222.70px" width="36.1" height="28.4" viewBox="0 0 37 28.3" preserveAspectRatio="none"><path d="M1.8 0H11.6c.9 0 1.5.3 2.1.9L15.8 3H35a2 2 0 0 1 2 2V26.3a2 2 0 0 1-2 2H2a2 2 0 0 1-2-2V1.8A1.8 1.8 0 0 1 1.8 0Z" fill="#1a6fc6"/><path d="M0 7.800a1.800 1.800 0 0 1 1.800-1.800H12.400c.800 0 1.400-.200 2-.700l.500-.400c.500-.400 1-.500 1.700-.500H35.200a1.800 1.800 0 0 1 1.800 1.800V26.300a2 2 0 0 1-2 2H2a2 2 0 0 1-2-2Z" fill="url(#gpic)"/><path d="M3 27.2 18 12.2 33.5 27.2Z" fill="#f3f8fd"/><circle cx="23.6" cy="9.6" r="2.2" fill="#fff"/><path d="M0 26.3a2 2 0 0 0 2 2H35a2 2 0 0 0 2-2v-.5a2 2 0 0 1-2 2H2a2 2 0 0 1-2-2Z" fill="#0a58ad"/></svg>
<svg class="i" style="left:509.35px;top:248.50px" width="8.4" height="8.4" viewBox="0 0 8.4 8.4" ><g transform="translate(4.55 3.85) rotate(45) scale(0.894)" fill="#9a9fa4"><path d="M-2.500-5.800H2.500V-4.900L1.800-3.900V-1.300L3.300.100V1H.600L0 6.200-.600 1H-3.300V.100L-1.800-1.300V-3.900L-2.500-4.900Z"/></g></svg>
<svg class="i" style="left:457.35px;top:274.10px" width="36.1" height="28.4" viewBox="0 0 37 28.3" preserveAspectRatio="none"><path d="M1.8 0H11.6c.9 0 1.5.3 2.1.9L15.8 3H35a2 2 0 0 1 2 2V26.3a2 2 0 0 1-2 2H2a2 2 0 0 1-2-2V1.8A1.8 1.8 0 0 1 1.8 0Z" fill="url(#gyt)"/><path d="M0 7.800a1.800 1.800 0 0 1 1.800-1.800H12.400c.800 0 1.400-.200 2-.700l.500-.400c.500-.400 1-.500 1.700-.500H35.200a1.800 1.800 0 0 1 1.800 1.800V26.300a2 2 0 0 1-2 2H2a2 2 0 0 1-2-2Z" fill="url(#gy)"/><path d="M0 26.3a2 2 0 0 0 2 2H35a2 2 0 0 0 2-2v-.9a2 2 0 0 1-2 2H2a2 2 0 0 1-2-2Z" fill="#e9ae33" opacity=".7"/></svg>
<svg class="i" style="left:509.35px;top:299.90px" width="8.4" height="8.4" viewBox="0 0 8.4 8.4" ><g transform="translate(4.55 3.85) rotate(45) scale(0.894)" fill="#9a9fa4"><path d="M-2.500-5.800H2.500V-4.900L1.800-3.900V-1.300L3.300.100V1H.600L0 6.200-.600 1H-3.300V.100L-1.800-1.300V-3.900L-2.500-4.900Z"/></g></svg>
<svg class="i" style="left:457.35px;top:325.50px" width="36.1" height="28.4" viewBox="0 0 37 28.3" preserveAspectRatio="none"><path d="M1.8 0H11.6c.9 0 1.5.3 2.1.9L15.8 3H35a2 2 0 0 1 2 2V26.3a2 2 0 0 1-2 2H2a2 2 0 0 1-2-2V1.8A1.8 1.8 0 0 1 1.8 0Z" fill="url(#gyt)"/><path d="M0 7.800a1.800 1.800 0 0 1 1.800-1.800H12.400c.800 0 1.400-.200 2-.700l.500-.400c.500-.400 1-.500 1.700-.500H35.200a1.800 1.800 0 0 1 1.800 1.800V26.300a2 2 0 0 1-2 2H2a2 2 0 0 1-2-2Z" fill="url(#gy)"/><path d="M0 26.3a2 2 0 0 0 2 2H35a2 2 0 0 0 2-2v-.9a2 2 0 0 1-2 2H2a2 2 0 0 1-2-2Z" fill="#e9ae33" opacity=".7"/></svg>
<svg class="i" style="left:700.80px;top:171.30px" width="36.1" height="28.4" viewBox="0 0 37 28.3" preserveAspectRatio="none"><path d="M1.8 0H11.6c.9 0 1.5.3 2.1.9L15.8 3H35a2 2 0 0 1 2 2V26.3a2 2 0 0 1-2 2H2a2 2 0 0 1-2-2V1.8A1.8 1.8 0 0 1 1.8 0Z" fill="#12785a"/><path d="M0 7.800a1.800 1.800 0 0 1 1.800-1.800H12.400c.800 0 1.400-.200 2-.700l.500-.400c.500-.400 1-.500 1.700-.500H35.200a1.800 1.800 0 0 1 1.800 1.800V26.300a2 2 0 0 1-2 2H2a2 2 0 0 1-2-2Z" fill="url(#gdown)"/><path d="M18.400 8.300v11.600M13.400 15.200l5 5 5-5" stroke="#fff" stroke-width="1.800" fill="none"/><path d="M12.200 23.800h12.400" stroke="#fff" stroke-width="1.700"/><path d="M0 26.3a2 2 0 0 0 2 2H35a2 2 0 0 0 2-2v-.9a2 2 0 0 1-2 2H2a2 2 0 0 1-2-2Z" fill="#087489" opacity=".8"/></svg>
<svg class="i" style="left:752.80px;top:197.10px" width="8.4" height="8.4" viewBox="0 0 8.4 8.4" ><g transform="translate(4.55 3.85) rotate(45) scale(0.894)" fill="#9a9fa4"><path d="M-2.500-5.800H2.500V-4.900L1.800-3.900V-1.300L3.300.100V1H.600L0 6.200-.600 1H-3.300V.100L-1.800-1.300V-3.900L-2.500-4.900Z"/></g></svg>
<svg class="i" style="left:700.80px;top:222.70px" width="36.1" height="28.4" viewBox="0 0 37 28.3" preserveAspectRatio="none"><path d="M1.8 0H11.6c.9 0 1.5.3 2.1.9L15.8 3H35a2 2 0 0 1 2 2V26.3a2 2 0 0 1-2 2H2a2 2 0 0 1-2-2V1.8A1.8 1.8 0 0 1 1.8 0Z" fill="#c0621c"/><path d="M0 7.800a1.800 1.800 0 0 1 1.800-1.800H12.400c.800 0 1.400-.200 2-.700l.500-.400c.500-.400 1-.500 1.700-.500H35.200a1.800 1.800 0 0 1 1.800 1.800V26.300a2 2 0 0 1-2 2H2a2 2 0 0 1-2-2Z" fill="url(#gmus)"/><ellipse cx="16.800" cy="21.200" rx="3.200" ry="2.900" fill="#fff"/><path d="M18.300 21.400V9.300l6.300-2v4l-4.100 1.300V21.400Z" fill="#fff"/><path d="M0 26.3a2 2 0 0 0 2 2H35a2 2 0 0 0 2-2v-.9a2 2 0 0 1-2 2H2a2 2 0 0 1-2-2Z" fill="#6b3aa8" opacity=".6"/></svg>
<svg class="i" style="left:752.80px;top:248.50px" width="8.4" height="8.4" viewBox="0 0 8.4 8.4" ><g transform="translate(4.55 3.85) rotate(45) scale(0.894)" fill="#9a9fa4"><path d="M-2.500-5.800H2.500V-4.900L1.800-3.900V-1.300L3.300.100V1H.600L0 6.200-.600 1H-3.300V.100L-1.800-1.300V-3.900L-2.500-4.900Z"/></g></svg>
<svg class="i" style="left:700.80px;top:274.10px" width="36.1" height="28.4" viewBox="0 0 37 28.3" preserveAspectRatio="none"><path d="M1.8 0H11.6c.9 0 1.5.3 2.1.9L15.8 3H35a2 2 0 0 1 2 2V26.3a2 2 0 0 1-2 2H2a2 2 0 0 1-2-2V1.8A1.8 1.8 0 0 1 1.8 0Z" fill="url(#gyt)"/><path d="M0 7.800a1.800 1.800 0 0 1 1.800-1.800H12.400c.800 0 1.400-.200 2-.700l.500-.400c.500-.400 1-.500 1.700-.500H35.200a1.800 1.800 0 0 1 1.800 1.800V26.300a2 2 0 0 1-2 2H2a2 2 0 0 1-2-2Z" fill="url(#gy)"/><path d="M0 26.3a2 2 0 0 0 2 2H35a2 2 0 0 0 2-2v-.9a2 2 0 0 1-2 2H2a2 2 0 0 1-2-2Z" fill="#e9ae33" opacity=".7"/></svg>
<svg class="i" style="left:752.80px;top:299.90px" width="8.4" height="8.4" viewBox="0 0 8.4 8.4" ><g transform="translate(4.55 3.85) rotate(45) scale(0.894)" fill="#9a9fa4"><path d="M-2.500-5.800H2.500V-4.900L1.800-3.900V-1.300L3.300.100V1H.600L0 6.200-.600 1H-3.300V.100L-1.800-1.300V-3.900L-2.500-4.900Z"/></g></svg>
<svg class="i" style="left:700.80px;top:325.50px" width="36.1" height="28.4" viewBox="0 0 37 28.3" preserveAspectRatio="none"><path d="M1.8 0H11.6c.9 0 1.5.3 2.1.9L15.8 3H35a2 2 0 0 1 2 2V26.3a2 2 0 0 1-2 2H2a2 2 0 0 1-2-2V1.8A1.8 1.8 0 0 1 1.8 0Z" fill="url(#gyt)"/><path d="M0 7.800a1.800 1.800 0 0 1 1.800-1.800H12.400c.800 0 1.400-.200 2-.700l.500-.400c.500-.400 1-.500 1.700-.500H35.200a1.800 1.800 0 0 1 1.800 1.800V26.300a2 2 0 0 1-2 2H2a2 2 0 0 1-2-2Z" fill="url(#gy)"/><path d="M0 26.3a2 2 0 0 0 2 2H35a2 2 0 0 0 2-2v-.9a2 2 0 0 1-2 2H2a2 2 0 0 1-2-2Z" fill="#e9ae33" opacity=".7"/></svg>
<span class="t" style="left:38.00px;top:13.17px;font-size:10.18px;color:#1f1f1f;"><span class="s" id="t0" style="transform:scaleX(1.0169);-webkit-text-stroke:0.22px currentColor;">Home</span></span>
<span class="t" style="left:236.00px;top:45.74px;font-size:11.87px;color:#202020;"><span class="s" id="t1" style="transform:scaleX(1.0114);">Home</span></span>
<span class="t" style="left:786.50px;top:46.09px;font-size:11.87px;color:#6a6a6a;"><span class="s" id="t2" style="transform:scaleX(0.9708);">Search Home</span></span>
<span class="t" style="left:39.75px;top:90.92px;font-size:10.18px;color:#adadad;"><span class="s" id="t3" style="transform:scaleX(0.9946);">New</span></span>
<span class="t" style="left:371.25px;top:90.92px;font-size:10.18px;color:#adadad;"><span class="s" id="t4" style="transform:scaleX(0.9863);">Sort</span></span>
<span class="t" style="left:445.25px;top:90.92px;font-size:10.18px;color:#2a2a2a;"><span class="s" id="t5" style="transform:scaleX(0.9943);">View</span></span>
<span class="t" style="left:522.90px;top:90.92px;font-size:10.18px;color:#2a2a2a;"><span class="s" id="t6" style="transform:scaleX(0.9664);">Filter</span></span>
<span class="t" style="left:972.00px;top:90.92px;font-size:10.18px;color:#2a2a2a;"><span class="s" id="t7" style="transform:scaleX(0.9729);">Details</span></span>
<span class="t" style="left:48.40px;top:132.87px;font-size:10.18px;color:#191919;"><span class="s" id="t8" style="transform:scaleX(1.0317);-webkit-text-stroke:0.22px currentColor;">Home</span></span>
<span class="t" style="left:48.40px;top:160.30px;font-size:10.18px;color:#191919;"><span class="s" id="t9" style="transform:scaleX(0.9276);">Gallery</span></span>
<span class="t" style="left:48.40px;top:187.73px;font-size:10.18px;color:#191919;width:71.40px;overflow:hidden;"><span class="s" id="t10" style="transform:scaleX(0.9500);">OneDrive - Personal</span></span>
<span class="t" style="left:48.40px;top:242.59px;font-size:10.18px;color:#191919;"><span class="s" id="t11" style="transform:scaleX(0.9401);">Recycle Bin</span></span>
<span class="t" style="left:48.40px;top:270.02px;font-size:10.18px;color:#191919;"><span class="s" id="t12" style="transform:scaleX(0.9591);">Desktop</span></span>
<span class="t" style="left:48.40px;top:297.45px;font-size:10.18px;color:#191919;"><span class="s" id="t13" style="transform:scaleX(0.9915);">Downloads</span></span>
<span class="t" style="left:48.40px;top:324.88px;font-size:10.18px;color:#191919;"><span class="s" id="t14" style="transform:scaleX(0.9951);">Documents</span></span>
<span class="t" style="left:48.40px;top:352.31px;font-size:10.18px;color:#191919;"><span class="s" id="t15" style="transform:scaleX(0.9524);">Pictures</span></span>
<span class="t" style="left:48.40px;top:379.74px;font-size:10.18px;color:#191919;"><span class="s" id="t16" style="transform:scaleX(1.0052);">Music</span></span>
<span class="t" style="left:48.40px;top:407.17px;font-size:10.18px;color:#191919;"><span class="s" id="t17" style="transform:scaleX(0.9443);">Videos</span></span>
<span class="t" style="left:48.40px;top:434.60px;font-size:10.18px;color:#191919;width:57.00px;overflow:hidden;"><span class="s" id="t18" style="transform:scaleX(0.9849);">Current Works</span></span>
<span class="t" style="left:48.40px;top:462.03px;font-size:10.18px;color:#191919;width:57.00px;overflow:hidden;"><span class="s" id="t19" style="transform:scaleX(0.9951);">Study Material</span></span>
<span class="t" style="left:48.40px;top:489.46px;font-size:10.18px;color:#191919;"><span class="s" id="t20" style="transform:scaleX(0.9497);">Screenshots</span></span>
<span class="t" style="left:48.40px;top:516.89px;font-size:10.18px;color:#191919;"><span class="s" id="t21" style="transform:scaleX(0.9636);">Weekly Reports</span></span>
<span class="t" style="left:48.40px;top:544.32px;font-size:10.18px;color:#191919;clip-path:inset(0 0 11.4px 0);"><span class="s" id="t22" style="transform:scaleX(1.0499);">platform-tools</span></span>
<span class="t" style="left:13.00px;top:551.77px;font-size:10.18px;color:#333;"><span class="s" id="t23" style="transform:scaleX(0.9778);">13 items</span></span>
<span class="t" style="left:187.70px;top:135.87px;font-size:10.18px;color:#1f1f1f;"><span class="s" id="t24" style="transform:scaleX(0.9636);-webkit-text-stroke:0.22px currentColor;">Quick access</span></span>
<span class="t" style="left:187.50px;top:429.07px;font-size:10.18px;color:#1f1f1f;"><span class="s" id="t25" style="transform:scaleX(0.9942);-webkit-text-stroke:0.22px currentColor;">Favorites</span></span>
<span class="t" style="left:187.50px;top:451.97px;font-size:10.18px;color:#a3a3a3;"><span class="s" id="t26" style="transform:scaleX(1.0085);">After you've favorited some files, we'll show them here.</span></span>
<span class="t" style="left:263.40px;top:166.57px;font-size:10.18px;color:#1f1f1f;"><span class="s" id="t27" style="transform:scaleX(0.9233);">Recycle Bin</span></span>
<span class="t" style="left:263.40px;top:180.27px;font-size:10.18px;color:#767676;"><span class="s" id="t28" style="transform:scaleX(0.9875);">Stored locally</span></span>
<span class="t" style="left:263.40px;top:217.97px;font-size:10.18px;color:#1f1f1f;"><span class="s" id="t29" style="transform:scaleX(1.0009);">Documents</span></span>
<span class="t" style="left:263.40px;top:231.67px;font-size:10.18px;color:#767676;"><span class="s" id="t30" style="transform:scaleX(0.9875);">Stored locally</span></span>
<span class="t" style="left:263.40px;top:269.37px;font-size:10.18px;color:#1f1f1f;"><span class="s" id="t31" style="transform:scaleX(0.9767);">Videos</span></span>
<span class="t" style="left:263.40px;top:283.07px;font-size:10.18px;color:#767676;"><span class="s" id="t32" style="transform:scaleX(0.9875);">Stored locally</span></span>
<span class="t" style="left:263.40px;top:320.77px;font-size:10.18px;color:#1f1f1f;"><span class="s" id="t33" style="transform:scaleX(1.0499);">platform-tools</span></span>
<span class="t" style="left:263.40px;top:334.47px;font-size:10.18px;color:#767676;"><span class="s" id="t34" style="transform:scaleX(1.0266);">Desktop\Voilet\platf...</span></span>
<span class="t" style="left:263.40px;top:372.17px;font-size:10.18px;color:#1f1f1f;"><span class="s" id="t35" style="transform:scaleX(0.9733);">Weekly Reports</span></span>
<span class="t" style="left:263.40px;top:385.87px;font-size:10.18px;color:#767676;"><span class="s" id="t36" style="transform:scaleX(0.9873);">My Kamputtar (C:)\A...</span></span>
<span class="t" style="left:506.85px;top:166.57px;font-size:10.18px;color:#1f1f1f;"><span class="s" id="t37" style="transform:scaleX(0.9832);">Desktop</span></span>
<span class="t" style="left:506.85px;top:180.27px;font-size:10.18px;color:#767676;"><span class="s" id="t38" style="transform:scaleX(0.9875);">Stored locally</span></span>
<span class="t" style="left:506.85px;top:217.97px;font-size:10.18px;color:#1f1f1f;"><span class="s" id="t39" style="transform:scaleX(0.9469);">Pictures</span></span>
<span class="t" style="left:506.85px;top:231.67px;font-size:10.18px;color:#767676;"><span class="s" id="t40" style="transform:scaleX(0.9875);">Stored locally</span></span>
<span class="t" style="left:506.85px;top:269.37px;font-size:10.18px;color:#1f1f1f;"><span class="s" id="t41" style="transform:scaleX(0.9849);">Current Works</span></span>
<span class="t" style="left:506.85px;top:283.07px;font-size:10.18px;color:#767676;"><span class="s" id="t42" style="transform:scaleX(0.9833);">My Kamputtar (C:)\A...</span></span>
<span class="t" style="left:506.85px;top:320.77px;font-size:10.18px;color:#1f1f1f;"><span class="s" id="t43" style="transform:scaleX(0.9497);">Screenshots</span></span>
<span class="t" style="left:506.85px;top:334.47px;font-size:10.18px;color:#767676;"><span class="s" id="t44" style="transform:scaleX(0.9469);">Pictures</span></span>
<span class="t" style="left:750.30px;top:166.57px;font-size:10.18px;color:#1f1f1f;"><span class="s" id="t45" style="transform:scaleX(0.9915);">Downloads</span></span>
<span class="t" style="left:750.30px;top:180.27px;font-size:10.18px;color:#767676;"><span class="s" id="t46" style="transform:scaleX(0.9875);">Stored locally</span></span>
<span class="t" style="left:750.30px;top:217.97px;font-size:10.18px;color:#1f1f1f;"><span class="s" id="t47" style="transform:scaleX(0.9788);">Music</span></span>
<span class="t" style="left:750.30px;top:231.67px;font-size:10.18px;color:#767676;"><span class="s" id="t48" style="transform:scaleX(0.9875);">Stored locally</span></span>
<span class="t" style="left:750.30px;top:269.37px;font-size:10.18px;color:#1f1f1f;"><span class="s" id="t49" style="transform:scaleX(0.9951);">Study Material</span></span>
<span class="t" style="left:750.30px;top:283.07px;font-size:10.18px;color:#767676;"><span class="s" id="t50" style="transform:scaleX(0.9967);">My Kamputtar (C:)\A</span></span>
<span class="t" style="left:750.30px;top:320.77px;font-size:10.18px;color:#1f1f1f;"><span class="s" id="t51" style="transform:scaleX(1.0084);">Voilet</span></span>
<span class="t" style="left:750.30px;top:334.47px;font-size:10.18px;color:#767676;"><span class="s" id="t52" style="transform:scaleX(0.9885);">Desktop</span></span>
</div></div>
</body></html>
